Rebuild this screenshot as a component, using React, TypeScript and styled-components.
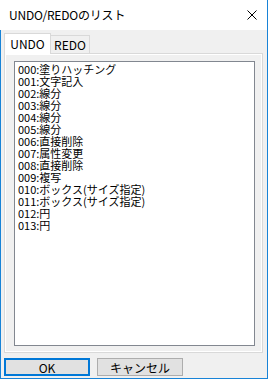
import React from "react";
import styled, { createGlobalStyle } from "styled-components";

const Global = createGlobalStyle`
  html, body { margin: 0; padding: 0; background: #f0f0f0; }
  body { width: 268px; height: 379px; overflow: hidden; }
  * { box-sizing: border-box; }
`;

const BLUE = "#1883d7";
const FONT = `"Noto Sans CJK JP", "Noto Sans", sans-serif`;

const Window = styled.div`
  width: 268px;
  height: 379px;
  display: flex;
  flex-direction: column;
  border-right: 1px solid ${BLUE};
  border-bottom: 1px solid ${BLUE};
  font-family: ${FONT};
  color: #000;
`;

const TitleBar = styled.div`
  height: 30px;
  flex: none;
  background: #fff;
  display: flex;
  align-items: center;
  justify-content: space-between;
  padding: 0 10px 0 9px;
`;

const Title = styled.div`
  font-size: 12px;
  line-height: 14px;
  letter-spacing: -0.2px;
`;

const CloseButton = styled.div`
  width: 10px;
  height: 10px;
  display: flex;
`;

const Body = styled.div`
  flex: 1;
  background: #f0f0f0;
  border-left: 1px solid ${BLUE};
  padding: 3px 0 0 3px;
  display: flex;
  flex-direction: column;
`;

const TabStrip = styled.div`
  display: flex;
  align-items: flex-end;
  height: 20px;
  position: relative;
  z-index: 1;
`;

const Tab = styled.div<{ $active?: boolean; $width: number }>`
  width: ${(p) => p.$width}px;
  height: ${(p) => (p.$active ? 21 : 18)}px;
  margin-bottom: ${(p) => (p.$active ? -1 : 0)}px;
  border: 1px solid #d9d9d9;
  border-bottom: none;
  border-left: ${(p) => (p.$active ? "1px solid #d9d9d9" : "none")};
  background: ${(p) => (p.$active ? "#fff" : "#f0f0f0")};
  font-size: 12px;
  display: flex;
  align-items: center;
  justify-content: center;
  padding-bottom: ${(p) => (p.$active ? 2 : 0)}px;
`;

const Pane = styled.div`
  width: 259px;
  height: 300px;
  border: 1px solid #d9d9d9;
  background: #f0f0f0;
  box-shadow: inset 0 0 0 1px #fff;
  padding: 7px 0 0 9px;
`;

const ListBox = styled.div`
  width: 241px;
  height: 285px;
  border: 1px solid #828790;
  background: #fff;
  padding: 1px 0 0 3px;
  font-size: 11px;
  line-height: 12px;
`;

const Item = styled.div`
  height: 12px;
  white-space: nowrap;
`;

const ButtonRow = styled.div`
  display: flex;
  gap: 7px;
  margin-top: 5px;
`;

const Button = styled.div<{ $default?: boolean }>`
  width: 86px;
  height: 18px;
  background: #e1e1e1;
  border: ${(p) => (p.$default ? `2px solid #0078d7` : `1px solid #adadad`)};
  display: flex;
  align-items: center;
  justify-content: center;
  font-size: 12px;
`;

const items = [
  "000:塗りハッチング",
  "001:文字記入",
  "002:線分",
  "003:線分",
  "004:線分",
  "005:線分",
  "006:直接削除",
  "007:属性変更",
  "008:直接削除",
  "009:複写",
  "010:ボックス(サイズ指定)",
  "011:ボックス(サイズ指定)",
  "012:円",
  "013:円",
];

export default function App() {
  return (
    <>
      <Global />
      <Window>
        <TitleBar>
          <Title>UNDO/REDOのリスト</Title>
          <CloseButton>
            <svg width="10" height="10" viewBox="0 0 10 10">
              <path d="M0.5 0.5 L9.5 9.5 M9.5 0.5 L0.5 9.5" stroke="#000" strokeWidth="1" />
            </svg>
          </CloseButton>
        </TitleBar>
        <Body>
          <TabStrip>
            <Tab $active $width={47}>UNDO</Tab>
            <Tab $width={39}>REDO</Tab>
          </TabStrip>
          <Pane>
            <ListBox>
              {items.map((t) => (
                <Item key={t}>{t}</Item>
              ))}
            </ListBox>
          </Pane>
          <ButtonRow>
            <Button $default>OK</Button>
            <Button>キャンセル</Button>
          </ButtonRow>
        </Body>
      </Window>
    </>
  );
}
